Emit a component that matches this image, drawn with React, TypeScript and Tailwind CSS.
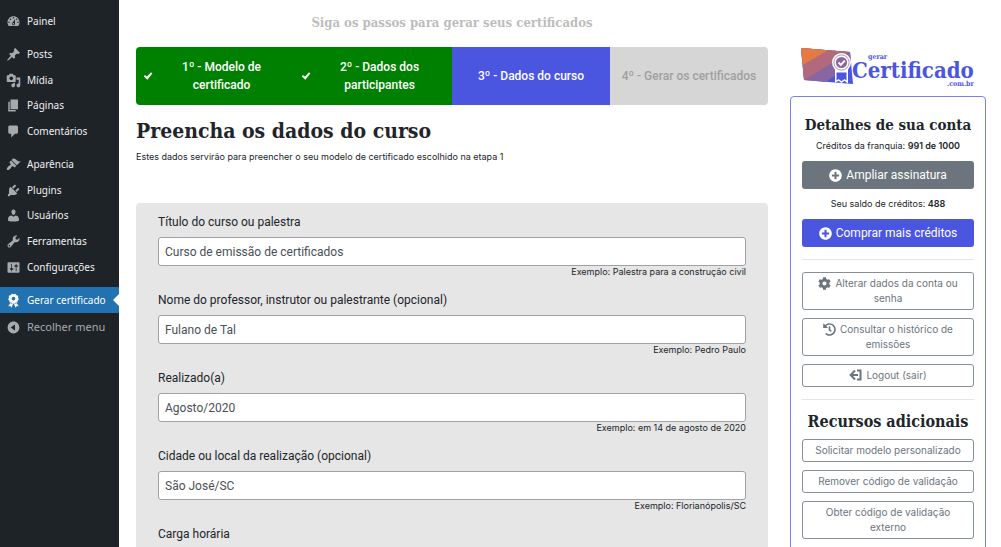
import type { ReactNode } from "react";
import { FaCog, FaHistory, FaPlusCircle } from "react-icons/fa";

const serif = "font-['DejaVu_Serif_Condensed','DejaVu_Serif',serif] font-bold";
const body = "font-['Roboto',sans-serif] text-[12px]";

const icons = {
  dashboard:
    "M3.76 16h12.48c1.1-1.37 1.76-3.11 1.76-5 0-4.42-3.58-8-8-8s-8 3.58-8 8c0 1.89.66 3.63 1.76 5zM10 4c.55 0 1 .45 1 1s-.45 1-1 1-1-.45-1-1 .45-1 1-1zM6 6c.55 0 1 .45 1 1s-.45 1-1 1-1-.45-1-1 .45-1 1-1zm8 0c.55 0 1 .45 1 1s-.45 1-1 1-1-.45-1-1 .45-1 1-1zm-5.37 5.55L12 7v6c0 1.1-.9 2-2 2s-2-.9-2-2c0-.57.24-1.08.63-1.45zM4 10c.55 0 1 .45 1 1s-.45 1-1 1-1-.45-1-1 .45-1 1-1zm12 0c.55 0 1 .45 1 1s-.45 1-1 1-1-.45-1-1 .45-1 1-1zm-5 3c0-.55-.45-1-1-1s-1 .45-1 1 .45 1 1 1 1-.45 1-1z",
  pin: "M10.44 3.02l1.82-1.82 6.36 6.35-1.83 1.82c-1.05-.68-2.48-.57-3.41.36l-.75.75c-.92.93-1.04 2.35-.35 3.41l-1.83 1.82-2.41-2.41-2.8 2.79c-.42.42-3.38 2.71-3.8 2.29s1.86-3.39 2.28-3.81l2.79-2.79L4.1 9.36l1.83-1.82c1.05.69 2.48.57 3.4-.36l.75-.75c.93-.92 1.05-2.35.36-3.41z",
  media:
    "M13 11V4c0-.55-.45-1-1-1h-1.67L9 1H5L3.67 3H2c-.55 0-1 .45-1 1v7c0 .55.45 1 1 1h10c.55 0 1-.45 1-1zM7 4.5c1.38 0 2.5 1.12 2.5 2.5S8.38 9.5 7 9.5 4.5 8.38 4.5 7 5.62 4.5 7 4.5zM14 6h5v10.5c0 1.38-1.12 2.5-2.5 2.5S14 17.88 14 16.5s1.12-2.5 2.5-2.5c.17 0 .34.02.5.05V9h-3V6zm-4 8.05V13h2v3.5c0 1.38-1.12 2.5-2.5 2.5S7 17.88 7 16.5 8.12 14 9.5 14c.17 0 .34.02.5.05z",
  page: "M6 15V2h10v13H6zm-1 1h8v2H3V5h2v11z",
  comment: "M5 2h9c1.1 0 2 .9 2 2v7c0 1.1-.9 2-2 2h-2l-5 5v-5H5c-1.1 0-2-.9-2-2V4c0-1.1.9-2 2-2z",
  brush:
    "M14.48 11.06L7.41 3.99l1.5-1.5c.5-.56 2.3-.47 3.51.32 1.21.8 1.43 1.28 2.91 2.1 1.18.64 2.45 1.26 4.45.85zm-.71.71L6.7 4.7 4.93 6.47c-.39.39-.39 1.02 0 1.41l1.06 1.06c.39.39.39 1.03 0 1.42-.6.6-1.43 1.11-2.21 1.69-.35.26-.7.53-1.01.84C1.43 14.23.4 16.08 1.4 17.07c.99 1 2.84-.03 4.18-1.36.31-.31.58-.66.85-1.02.57-.78 1.08-1.61 1.69-2.21.39-.39 1.02-.39 1.41 0l1.06 1.06c.39.39 1.02.39 1.41 0z",
  plug: "M13.11 4.36L9.87 7.6 8 5.73l3.24-3.24c.35-.34 1.05-.2 1.56.32.52.51.66 1.21.31 1.55zm-8 1.77l.91-1.12 9.01 9.01-1.19.84c-.71.71-2.63 1.16-3.82 1.16H6.14L4.9 17.26c-.59.59-1.54.59-2.12 0-.59-.58-.59-1.53 0-2.12l1.24-1.24v-3.88c0-1.13.4-3.19 1.09-3.89zm7.26 3.97l3.24-3.24c.34-.35 1.04-.21 1.55.31.52.51.66 1.21.31 1.55l-3.24 3.25z",
  user: "M10 9.25c-2.27 0-2.73-3.44-2.73-3.44C7 4.02 7.82 2 9.97 2c2.16 0 2.98 2.02 2.71 3.81 0 0-.41 3.44-2.68 3.44zm0 2.57L12.72 10c2.39 0 4.52 2.33 4.52 4.53v2.49s-3.65 1.13-7.24 1.13c-3.65 0-7.24-1.13-7.24-1.13v-2.49c0-2.25 1.94-4.48 4.47-4.48z",
  wrench:
    "M16.68 9.77c-1.34 1.34-3.3 1.67-4.95.99l-5.41 6.52c-.99.99-2.59.99-3.58 0s-.99-2.59 0-3.57l6.52-5.42c-.68-1.65-.35-3.61.99-4.95 1.28-1.28 3.12-1.62 4.72-1.06l-2.89 2.89 2.82 2.82 2.86-2.87c.53 1.58.18 3.39-1.08 4.65zM3.81 16.21c.4.39 1.04.39 1.43 0 .4-.4.4-1.04 0-1.43-.39-.4-1.03-.4-1.43 0-.39.39-.39 1.03 0 1.43z",
  sliders:
    "M18 16V4c0-.55-.45-1-1-1H3c-.55 0-1 .45-1 1v12c0 .55.45 1 1 1h14c.55 0 1-.45 1-1zM8 11h1c.55 0 1 .45 1 1s-.45 1-1 1H8v1.5c0 .28-.22.5-.5.5s-.5-.22-.5-.5V13H6c-.55 0-1-.45-1-1s.45-1 1-1h1V5.5c0-.28.22-.5.5-.5s.5.22.5.5V11zm5-2h-1c-.55 0-1-.45-1-1s.45-1 1-1h1V5.5c0-.28.22-.5.5-.5s.5.22.5.5V7h1c.55 0 1 .45 1 1s-.45 1-1 1h-1v5.5c0 .28-.22.5-.5.5s-.5-.22-.5-.5V9z",
  award:
    "M10 1.500l2.300-.6 1.600 2 2.300.9-.1 2.500 1.100 2.200-1.700 1.700-.4 2.400-2.500.3-1.700 1.700-.9-.5-.9.5-1.700-1.700-2.500-.3-.4-2.400-1.700-1.700 1.100-2.200-.1-2.500 2.300-.9 1.600-2zM10 9.900a2.400 2.400 0 1 0 0-4.800 2.400 2.400 0 0 0 0 4.800zM5.500 13.500l3 .8.700.9L7 19.500l-1.300-2.100-2.700.2zM14.500 13.500l-3 .8-.7.9L13 19.500l1.300-2.100 2.700.2z",
  collapse:
    "M10 2.160c4.330 0 7.840 3.510 7.840 7.840s-3.510 7.840-7.840 7.840S2.160 14.330 2.160 10 5.670 2.160 10 2.160zm2 11.720V6.120L6.180 9.970z",
};

type IconName = keyof typeof icons;

function Dashicon({ name }: { name: IconName }) {
  return (
    <svg viewBox="0 0 20 20" className="size-[15px] shrink-0" fill="currentColor" fillRule="evenodd" aria-hidden="true">
      <path d={icons[name]} />
    </svg>
  );
}

function NavGroup({ items, className }: { items: [IconName, string][]; className: string }) {
  return (
    <ul className={`grid ${className}`}>
      {items.map(([icon, label]) => (
        <li key={label} className="grid">
          <a href="#" className="flex items-center gap-1.5 pl-1.5 text-[#a7aaad]">
            <Dashicon name={icon} />
            <span className="text-[#f0f0f1]">{label}</span>
          </a>
        </li>
      ))}
    </ul>
  );
}

function Sidebar() {
  return (
    <nav className="w-[119px] shrink-0 bg-[#1d2327] pt-2 font-['Noto_Sans',sans-serif] text-[10px]">
      <NavGroup className="mb-2 h-[26px]" items={[["dashboard", "Painel"]]} />
      <NavGroup
        className="mb-2 h-[102px] grid-rows-4"
        items={[
          ["pin", "Posts"],
          ["media", "Mídia"],
          ["page", "Páginas"],
          ["comment", "Comentários"],
        ]}
      />
      <NavGroup
        className="mb-[7px] h-[128px] grid-rows-5"
        items={[
          ["brush", "Aparência"],
          ["plug", "Plugins"],
          ["user", "Usuários"],
          ["wrench", "Ferramentas"],
          ["sliders", "Configurações"],
        ]}
      />
      <a href="#" aria-current="page" className="flex h-[26px] items-center gap-1.5 bg-[#2271b1] pl-1.5 text-white">
        <Dashicon name="award" />
        <span className="flex-1 whitespace-nowrap">Gerar certificado</span>
        <svg viewBox="0 0 6 12" className="h-3 w-1.5 shrink-0" fill="#fff" aria-hidden="true">
          <path d="M6 0v12L0 6z" />
        </svg>
      </a>
      <button type="button" className="flex h-7 items-center gap-1.5 pl-1.5 text-[11px] text-[#a7aaad]">
        <Dashicon name="collapse" />
        Recolher menu
      </button>
    </nav>
  );
}

function Step({ children, className, done }: { children: ReactNode; className: string; done?: boolean }) {
  return (
    <li className={`flex flex-1 items-center text-center ${className}`}>
      {done && (
        <svg viewBox="0 0 10 10" className="ml-[7px] size-2.5 shrink-0" fill="#fff" aria-label="Concluído">
          <path d="M8 1.300l1.400 1.200-5 6.300L.8 5.600l1.100-1.700 2.100 1.500z" />
        </svg>
      )}
      <span className={`flex-1 ${done ? "pr-6 pl-5" : ""}`}>{children}</span>
    </li>
  );
}

function Field({ id, label, value, hint }: { id: string; label: string; value: string; hint: string }) {
  return (
    <div className="mb-3">
      <label htmlFor={id} className={`mb-[5px] block leading-5 ${body}`}>
        {label}
      </label>
      <input
        id={id}
        defaultValue={value}
        aria-describedby={`${id}-hint`}
        className={`block h-[29px] w-full rounded-[3px] border border-[#a0a0a5] bg-white px-1.5 text-[#495057] ${body}`}
      />
      <p id={`${id}-hint`} className="text-right text-[9px] leading-3">
        {hint}
      </p>
    </div>
  );
}

function Logo() {
  return (
    <svg viewBox="0 0 174 42" className="w-full" role="img" aria-label="gerar Certificado .com.br">
      <path d="M0 1l49 4 3 32-49-4z" fill="#4a55e0" />
      <path d="M0 1l49 4 1.200 12L25 35 3 33z" fill="#8a66a0" />
      <path d="M0 1l49 4L3 33z" fill="#b1697b" />
      <path d="M0 1l27 2.200L1.500 18z" fill="#e57a45" />
      <path d="M34 22h13v14.500l-3.500-2.800-3 2.300-3-2.300-3.500 2z" fill="#fff" />
      <path d="M35.500 25.500h10v8l-2-1.500-3 2.300-3-2.300-2 1.500z" fill="#4a55e0" />
      <circle cx="40.500" cy="15.500" r="9.500" fill="#fff" />
      <circle cx="40.500" cy="15.500" r="7.600" fill="none" stroke="#8a66a0" strokeWidth=".7" />
      <circle cx="40.500" cy="15.500" r="5.600" fill="#8a66a0" />
      <path d="M37.500 15.500l2.300 2.300 4-4.200" fill="none" stroke="#fff" strokeWidth="1.900" />
      <g className={serif} fill="#4a55e0">
        <text x="51" y="31" fontSize="22">
          Certificado
        </text>
        <text x="67" y="12" fontSize="7">
          gerar
        </text>
        <text x="146" y="39" fontSize="7">
          .com.br
        </text>
      </g>
    </svg>
  );
}

function OutlineButton({ children }: { children: ReactNode }) {
  return (
    <button
      type="button"
      className="block w-full rounded-[3px] border border-[#868e96] px-2 py-[3px] text-[10px] leading-[15px] text-[#6c757d]"
    >
      {children}
    </button>
  );
}

function AccountPanel() {
  return (
    <aside className="w-[196px] shrink-0 pt-[47px]">
      <div className="mb-[7px] px-[11px]">
        <Logo />
      </div>
      <div className="rounded border border-[#7a82ea] px-[11px] pb-4 text-center">
        <h2 className={`mt-[18px] text-[15px] leading-5 ${serif} whitespace-nowrap`}>Detalhes de sua conta</h2>
        <p className="mt-[3px] text-[9px] leading-4">
          Créditos da franquia: <b className="font-semibold">991 de 1000</b>
        </p>
        <button
          type="button"
          className={`mt-[7px] flex h-7 w-full items-center justify-center gap-1 rounded-[3px] bg-[#6c757d] text-white ${body}`}
        >
          <FaPlusCircle className="size-[13px]" />
          Ampliar assinatura
        </button>
        <p className="my-[7px] text-[9px] leading-4">
          Seu saldo de créditos: <b className="font-semibold">488</b>
        </p>
        <button
          type="button"
          className={`flex h-7 w-full items-center justify-center gap-1 rounded-[3px] bg-[#4a55e0] text-white ${body}`}
        >
          <FaPlusCircle className="size-[13px]" />
          Comprar mais créditos
        </button>
        <hr className="my-3 border-[#e5e5e5]" />
        <div className="space-y-2">
          <OutlineButton>
            <FaCog className="-mt-0.5 mr-1 inline size-[13px] align-middle" />
            Alterar dados da conta ou senha
          </OutlineButton>
          <OutlineButton>
            <FaHistory className="-mt-0.5 mr-1 inline size-[13px] align-middle" />
            Consultar o histórico de emissões
          </OutlineButton>
          <OutlineButton>
            <svg
              viewBox="0 0 13 12"
              className="-mt-0.5 mr-1 inline h-3 w-[13px] align-middle"
              fill="none"
              stroke="currentColor"
              strokeWidth="2"
              aria-hidden="true"
            >
              <path d="M6 1.500L1.600 6 6 10.500M2 6h7M8 1.500h3.500v9H8" />
            </svg>
            Logout (sair)
          </OutlineButton>
        </div>
        <hr className="my-3 border-[#e5e5e5]" />
        <h2 className={`mb-[7px] text-[16px] leading-5 ${serif} whitespace-nowrap`}>Recursos adicionais</h2>
        <div className="space-y-2">
          <OutlineButton>Solicitar modelo personalizado</OutlineButton>
          <OutlineButton>Remover código de validação</OutlineButton>
          <OutlineButton>Obter código de validação externo</OutlineButton>
        </div>
      </div>
    </aside>
  );
}

export default function App() {
  return (
    <div className="flex min-h-screen bg-white font-['Inter',sans-serif] text-[#212529]">
      <Sidebar />
      <main className="flex flex-1 gap-[22px] pr-[15px] pl-[17px]">
        <section className="min-w-0 flex-1">
          <h2 className={`mt-[13px] text-center text-[13px] leading-5 text-[#bdbdbd] ${serif}`}>
            Siga os passos para gerar seus certificados
          </h2>
          <ol className={`mt-3.5 flex h-[58px] overflow-hidden rounded leading-[18px] font-medium text-white ${body}`}>
            <Step done className="bg-[#008000]">
              1º - Modelo de certificado
            </Step>
            <Step done className="bg-[#008000]">
              2º - Dados dos participantes
            </Step>
            <Step className="bg-[#4a55e0]">3º - Dados do curso</Step>
            <Step className="bg-[#d6d6d6] text-[#a0a0a0]">4º - Gerar os certificados</Step>
          </ol>
          <h1 className={`mt-2.5 text-[21px] leading-8 ${serif}`}>Preencha os dados do curso</h1>
          <p className="mt-0.5 text-[9px] leading-4">
            Estes dados servirão para preencher o seu modelo de certificado escolhido na etapa 1
          </p>
          <form className="mt-[38px] rounded bg-[#e6e6e6] px-[22px] pt-[9px] pb-4">
            <Field
              id="titulo"
              label="Título do curso ou palestra"
              value="Curso de emissão de certificados"
              hint="Exemplo: Palestra para a construção civil"
            />
            <Field
              id="professor"
              label="Nome do professor, instrutor ou palestrante (opcional)"
              value="Fulano de Tal"
              hint="Exemplo: Pedro Paulo"
            />
            <Field id="data" label="Realizado(a)" value="Agosto/2020" hint="Exemplo: em 14 de agosto de 2020" />
            <Field
              id="cidade"
              label="Cidade ou local da realização (opcional)"
              value="São José/SC"
              hint="Exemplo: Florianópolis/SC"
            />
            <label htmlFor="carga" className={`mb-[5px] block leading-5 ${body}`}>
              Carga horária
            </label>
            <input
              id="carga"
              className={`block h-[29px] w-full rounded-[3px] border border-[#a0a0a5] bg-white px-1.5 text-[#495057] ${body}`}
            />
          </form>
        </section>
        <AccountPanel />
      </main>
    </div>
  );
}
